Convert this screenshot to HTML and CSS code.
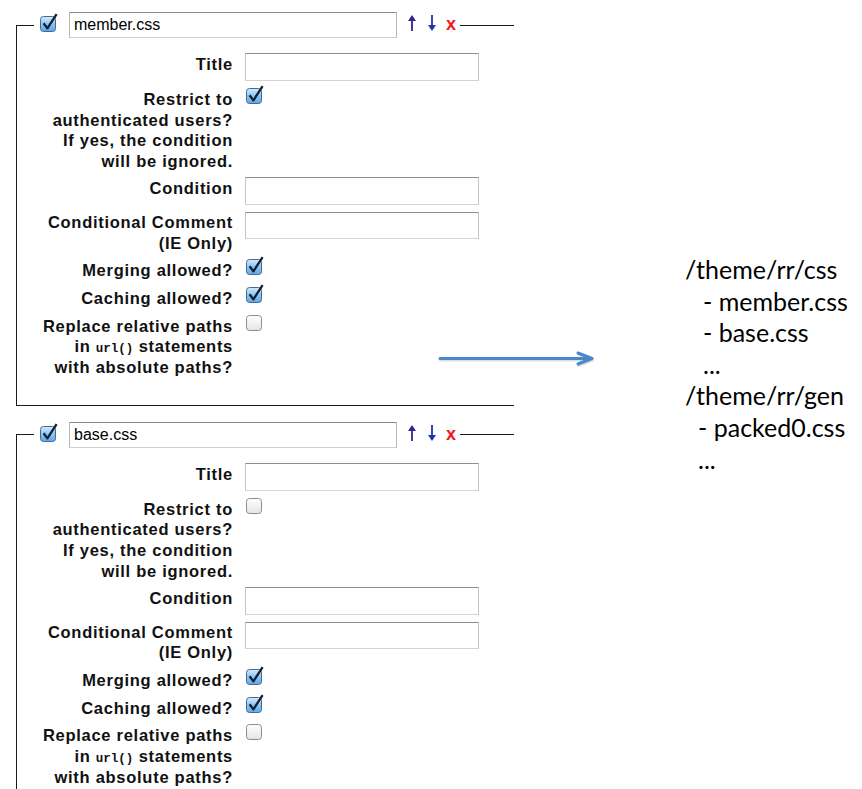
FILE: index.html
```html
<!DOCTYPE html>
<html>
<head>
<meta charset="utf-8">
<title>Resource registry</title>
<link rel="stylesheet" href="styles.css">
</head>
<body>
<div class="page">
  <div class="forms">
    <fieldset class="entry">
      <legend>
        <div class="legend-row">
          <svg class="cb cb-legend" width="19" height="20" viewBox="0 0 19 20"><defs><linearGradient id="gc1" x1="0" y1="0" x2="0" y2="1"><stop offset="0" stop-color="#d6ebfc"/><stop offset="0.5" stop-color="#8cc4f4"/><stop offset="1" stop-color="#5aa8ee"/></linearGradient></defs><rect x="0.5" y="3.5" width="15" height="15" rx="3" fill="url(#gc1)" stroke="#47698f"/><path d="M3.6 10.2 L7.4 15.4 L16.6 1.2" fill="none" stroke="#14202e" stroke-width="2.3" stroke-linejoin="round"/></svg>
          <input class="name" type="text" value="member.css">
          <svg class="mv up" width="8" height="16" viewBox="0 0 8 16"><path d="M4 0 L8 6 L4.9 6 L4.9 16 L3.1 16 L3.1 6 L0 6 Z" fill="#3a1e8c"/></svg>
          <svg class="mv down" width="8" height="16" viewBox="0 0 8 16"><path d="M4 16 L8 10 L4.9 10 L4.9 0 L3.1 0 L3.1 10 L0 10 Z" fill="#2434b0"/></svg>
          <span class="del">x</span>
        </div>
      </legend>
      <div class="row r-title"><span class="lbl">Title</span><input class="field" type="text"></div>
      <div class="row r-restrict"><span class="lbl">Restrict to<br>authenticated users?<br>If yes, the condition<br>will be ignored.</span><svg class="cb" width="19" height="20" viewBox="0 0 19 20"><rect x="0.5" y="3.5" width="15" height="15" rx="3" fill="url(#gc1)" stroke="#47698f"/><path d="M3.6 10.2 L7.4 15.4 L16.6 1.2" fill="none" stroke="#14202e" stroke-width="2.3" stroke-linejoin="round"/></svg></div>
      <div class="row r-cond"><span class="lbl">Condition</span><input class="field" type="text"></div>
      <div class="row r-cc"><span class="lbl">Conditional Comment<br>(IE Only)</span><input class="field flush" type="text"></div>
      <div class="row r-merge"><span class="lbl">Merging allowed?</span><svg class="cb" width="19" height="20" viewBox="0 0 19 20"><rect x="0.5" y="3.5" width="15" height="15" rx="3" fill="url(#gc1)" stroke="#47698f"/><path d="M3.6 10.2 L7.4 15.4 L16.6 1.2" fill="none" stroke="#14202e" stroke-width="2.3" stroke-linejoin="round"/></svg></div>
      <div class="row r-cache"><span class="lbl">Caching allowed?</span><svg class="cb" width="19" height="20" viewBox="0 0 19 20"><rect x="0.5" y="3.5" width="15" height="15" rx="3" fill="url(#gc1)" stroke="#47698f"/><path d="M3.6 10.2 L7.4 15.4 L16.6 1.2" fill="none" stroke="#14202e" stroke-width="2.3" stroke-linejoin="round"/></svg></div>
      <div class="row r-replace"><span class="lbl">Replace relative paths<br>in <code>url()</code> statements<br>with absolute paths?</span><svg class="cb" width="19" height="20" viewBox="0 0 19 20"><defs><linearGradient id="gu1" x1="0" y1="0" x2="0" y2="1"><stop offset="0" stop-color="#ffffff"/><stop offset="1" stop-color="#e4e4e4"/></linearGradient></defs><rect x="0.5" y="3.5" width="15" height="15" rx="3" fill="url(#gu1)" stroke="#8c8c8c"/></svg></div>
    </fieldset>

    <fieldset class="entry second">
      <legend>
        <div class="legend-row">
          <svg class="cb cb-legend" width="19" height="20" viewBox="0 0 19 20"><rect x="0.5" y="3.5" width="15" height="15" rx="3" fill="url(#gc1)" stroke="#47698f"/><path d="M3.6 10.2 L7.4 15.4 L16.6 1.2" fill="none" stroke="#14202e" stroke-width="2.3" stroke-linejoin="round"/></svg>
          <input class="name" type="text" value="base.css">
          <svg class="mv up" width="8" height="16" viewBox="0 0 8 16"><path d="M4 0 L8 6 L4.9 6 L4.9 16 L3.1 16 L3.1 6 L0 6 Z" fill="#3a1e8c"/></svg>
          <svg class="mv down" width="8" height="16" viewBox="0 0 8 16"><path d="M4 16 L8 10 L4.9 10 L4.9 0 L3.1 0 L3.1 10 L0 10 Z" fill="#2434b0"/></svg>
          <span class="del">x</span>
        </div>
      </legend>
      <div class="row r-title"><span class="lbl">Title</span><input class="field" type="text"></div>
      <div class="row r-restrict"><span class="lbl">Restrict to<br>authenticated users?<br>If yes, the condition<br>will be ignored.</span><svg class="cb" width="19" height="20" viewBox="0 0 19 20"><rect x="0.5" y="3.5" width="15" height="15" rx="3" fill="url(#gu1)" stroke="#8c8c8c"/></svg></div>
      <div class="row r-cond"><span class="lbl">Condition</span><input class="field" type="text"></div>
      <div class="row r-cc"><span class="lbl">Conditional Comment<br>(IE Only)</span><input class="field flush" type="text"></div>
      <div class="row r-merge"><span class="lbl">Merging allowed?</span><svg class="cb" width="19" height="20" viewBox="0 0 19 20"><rect x="0.5" y="3.5" width="15" height="15" rx="3" fill="url(#gc1)" stroke="#47698f"/><path d="M3.6 10.2 L7.4 15.4 L16.6 1.2" fill="none" stroke="#14202e" stroke-width="2.3" stroke-linejoin="round"/></svg></div>
      <div class="row r-cache"><span class="lbl">Caching allowed?</span><svg class="cb" width="19" height="20" viewBox="0 0 19 20"><rect x="0.5" y="3.5" width="15" height="15" rx="3" fill="url(#gc1)" stroke="#47698f"/><path d="M3.6 10.2 L7.4 15.4 L16.6 1.2" fill="none" stroke="#14202e" stroke-width="2.3" stroke-linejoin="round"/></svg></div>
      <div class="row r-replace"><span class="lbl">Replace relative paths<br>in <code>url()</code> statements<br>with absolute paths?</span><svg class="cb" width="19" height="20" viewBox="0 0 19 20"><rect x="0.5" y="3.5" width="15" height="15" rx="3" fill="url(#gu1)" stroke="#8c8c8c"/></svg></div>
    </fieldset>
  </div>

  <div class="paths">
    <div class="pl">/theme/rr/css</div>
    <div class="pl in2">- member.css</div>
    <div class="pl in2">- base.css</div>
    <div class="pl in2">...</div>
    <div class="pl">/theme/rr/gen</div>
    <div class="pl in1">- packed0.css</div>
    <div class="pl in1">...</div>
  </div>

  <svg class="arrow" width="164" height="24" viewBox="0 0 164 24">
    <path d="M4 10.5 L155 10.5 M142 5 L156 10.5 L142 16" fill="none" stroke="rgba(0,0,0,0.13)" stroke-width="3" stroke-linecap="round" stroke-linejoin="round" transform="translate(0.5,1.5)"/>
    <path d="M4 10.5 L155 10.5 M142 5 L156 10.5 L142 16" fill="none" stroke="#4a88c9" stroke-width="3" stroke-linecap="round" stroke-linejoin="round"/>
  </svg>
</div>
</body>
</html>
```

FILE: styles.css
```css
html, body {
  margin: 0;
  padding: 0;
  background: #ffffff;
  overflow: hidden;
}

.page {
  position: relative;
  display: flex;
  align-items: flex-start;
  padding-top: 12px;
  font-family: "Liberation Sans", Arial, sans-serif;
  color: #000;
}

.forms {
  margin-left: 16px;
  width: 498px;
  flex: none;
}

.entry {
  box-sizing: border-box;
  width: 498px;
  margin: 0;
  padding: 16px 0 27px 0;
  border: 1px solid #1a1a1a;
  border-right: none;
  min-inline-size: 0;
}

.entry.second {
  margin-top: 16px;
}

.entry legend {
  margin-left: 17px;
  padding: 0 4px 0 6px;
}

.legend-row {
  display: flex;
  align-items: flex-start;
  height: 26px;
}

.cb {
  display: block;
  flex: none;
}

.cb-legend {
  margin-top: 1px;
}

.name {
  box-sizing: border-box;
  width: 328px;
  height: 26px;
  margin: 0 0 0 10px;
  padding: 0 4px;
  border: 1px solid #b8b8b8;
  border-top-color: #8a8a8a;
  border-bottom-color: #d0d0d0;
  font-family: "Liberation Sans", Arial, sans-serif;
  font-size: 16px;
  color: #000;
  background: #fff;
  outline: none;
}

.mv {
  display: block;
  flex: none;
  margin-top: 3px;
}

.mv.up {
  margin-left: 11px;
}

.mv.down {
  margin-left: 12px;
}

.del {
  margin-left: 10px;
  margin-top: 3px;
  font-weight: bold;
  font-size: 18px;
  line-height: 18px;
  color: #f01818;
}

.row {
  display: flex;
  align-items: flex-start;
}

.lbl {
  flex: none;
  width: 216px;
  text-align: right;
  font-weight: bold;
  font-size: 16.5px;
  letter-spacing: 0.72px;
  line-height: 20.7px;
  white-space: nowrap;
  color: #111;
}

.lbl code {
  font-family: "Liberation Mono", "Courier New", monospace;
  font-size: 12.5px;
  line-height: 1;
  letter-spacing: 0;
  font-weight: bold;
}

.field {
  box-sizing: border-box;
  width: 234px;
  height: 28px;
  margin: -1px 0 0 12px;
  padding: 0 4px;
  border: 1px solid #c4c4c4;
  border-top-color: #8e8e8e;
  border-bottom-color: #d4d4d4;
  background: #fff;
  font-family: "Liberation Sans", Arial, sans-serif;
  font-size: 15px;
  outline: none;
}

.field.flush {
  margin-top: 0;
  height: 27px;
}

.row .cb {
  margin-left: 13px;
  margin-top: -4px;
}

.r-restrict { margin-top: 8px; }
.r-cond { margin-top: 6px; }
.r-cc { margin-top: 7px; }
.r-merge { margin-top: 7px; }
.r-cache { margin-top: 7px; }
.r-replace { margin-top: 7px; }

.paths {
  margin-left: 171px;
  padding-top: 242px;
  font-family: Lato, "Open Sans", sans-serif;
  font-size: 25px;
  line-height: 31.6px;
  color: #000;
  white-space: nowrap;
}

.pl.in1 { padding-left: 13px; }
.pl.in2 { padding-left: 18px; }

.arrow {
  position: absolute;
  left: 436px;
  top: 348px;
}
```
